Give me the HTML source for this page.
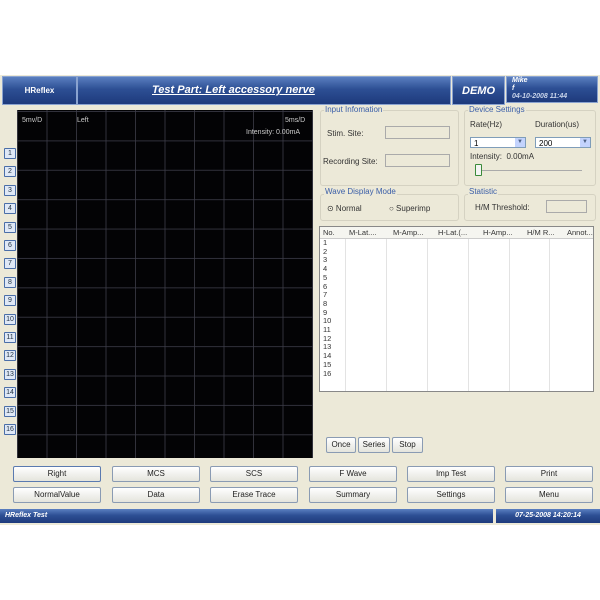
<!DOCTYPE html><html><head><style>
body{margin:0;width:600px;height:600px;background:#fff;font-family:"Liberation Sans",sans-serif;position:relative;overflow:hidden}
.a{position:absolute}
.app{left:0;top:75px;width:600px;height:450px;background:#ece9d8}
.hd{background:linear-gradient(#5a7fc0,#2d4f94 45%,#1e3a7c);border:1px solid #8aa3d0;color:#fff}
.sc{left:17px;top:110px;width:296px;height:348px;background:#030305;
background-image:linear-gradient(90deg,rgba(60,60,72,.8) 1px,transparent 1px),linear-gradient(rgba(60,60,72,.8) 1px,transparent 1px);background-size:29.5px 29.4px;background-position:0 1px}
.nb{left:4px;width:10px;height:9px;border:1px solid #4a6ea8;background:#dfe8f6;font-size:7px;color:#234;text-align:center;line-height:9px;border-radius:1px}
.btn{height:14px;border:1px solid #8a9bb3;border-radius:2px;background:linear-gradient(#fff,#e4e4dc);font-size:8px;color:#222;text-align:center;line-height:14px;width:86px}
.gb{border:1px solid #d5d2c2;border-radius:3px}
.lg{font-size:8px;color:#3a5ea8;background:#ece9d8;padding:0 1px}
.t{font-size:8px;color:#333}
.in{background:#ece9d8;border:1px solid #aaa;height:11px}
.sel{background:#fff;border:1px solid #7f9db9;height:11px;font-size:8px;line-height:11px;padding-left:3px;box-sizing:border-box}
.dd{position:absolute;right:0;top:0;width:10px;height:9px;background:#c3d3fd;color:#4d6185;font-size:6px;text-align:center;line-height:9px}
</style></head><body>
<div class="a app"></div>
<div class="a hd" style="left:2px;top:76px;width:73px;height:27px;font-size:8px;text-align:center;line-height:27px;font-weight:bold">HReflex</div>
<div class="a hd" style="left:77px;top:76px;width:372px;height:27px;"><div style="position:absolute;left:74px;top:7px;font-size:11px;font-style:italic;font-weight:bold;text-decoration:underline">Test Part: Left accessory nerve</div></div>
<div class="a hd" style="left:452px;top:76px;width:51px;height:27px;font-size:11px;font-style:italic;font-weight:bold;text-align:center;line-height:29px">DEMO</div>
<div class="a hd" style="left:506px;top:76px;width:92px;height:27px;font-size:7px;font-style:italic;font-weight:bold;line-height:8px;padding-left:5px;box-sizing:border-box">Mike<br>f<br><span style="color:#c8d4ea">04-10-2008 11:44</span></div>
<div class="a sc"></div>
<div class="a" style="left:22px;top:117px;font-size:7px;color:#ccc">5mv/D</div>
<div class="a" style="left:77px;top:117px;font-size:7px;color:#ccc">Left</div>
<div class="a" style="left:285px;top:117px;font-size:7px;color:#ccc">5ms/D</div>
<div class="a" style="left:246px;top:129px;font-size:7px;color:#ccc">Intensity: 0.00mA</div>
<div class="a nb" style="top:148px">1</div><div class="a nb" style="top:166px">2</div><div class="a nb" style="top:185px">3</div><div class="a nb" style="top:203px">4</div><div class="a nb" style="top:222px">5</div><div class="a nb" style="top:240px">6</div><div class="a nb" style="top:258px">7</div><div class="a nb" style="top:277px">8</div><div class="a nb" style="top:295px">9</div><div class="a nb" style="top:314px">10</div><div class="a nb" style="top:332px">11</div><div class="a nb" style="top:350px">12</div><div class="a nb" style="top:369px">13</div><div class="a nb" style="top:387px">14</div><div class="a nb" style="top:406px">15</div><div class="a nb" style="top:424px">16</div>
<div class="a gb" style="left:320px;top:110px;width:137px;height:74px"></div>
<div class="a lg" style="left:324px;top:105px">Input Infomation</div>
<div class="a t" style="left:327px;top:129px">Stim. Site:</div><div class="a in" style="left:385px;top:126px;width:63px"></div>
<div class="a t" style="left:323px;top:157px">Recording Site:</div><div class="a in" style="left:385px;top:154px;width:63px"></div>
<div class="a gb" style="left:464px;top:110px;width:130px;height:74px"></div>
<div class="a lg" style="left:468px;top:105px">Device Settings</div>
<div class="a t" style="left:470px;top:120px">Rate(Hz)</div><div class="a t" style="left:535px;top:120px">Duration(us)</div>
<div class="a sel" style="left:470px;top:137px;width:56px">1<div class="dd">▼</div></div>
<div class="a sel" style="left:535px;top:137px;width:56px">200<div class="dd">▼</div></div>
<div class="a t" style="left:470px;top:152px">Intensity:&nbsp; 0.00mA</div>
<div class="a" style="left:478px;top:170px;width:104px;height:1px;background:#aaa"></div>
<div class="a" style="left:475px;top:164px;width:5px;height:10px;border:1px solid #3a8a3a;background:#f4f4f4;border-radius:1px"></div>
<div class="a gb" style="left:320px;top:194px;width:137px;height:25px"></div>
<div class="a lg" style="left:324px;top:187px">Wave Display Mode</div>
<div class="a t" style="left:327px;top:204px">⊙ Normal</div><div class="a t" style="left:389px;top:204px">○ Superimp</div>
<div class="a gb" style="left:464px;top:194px;width:130px;height:25px"></div>
<div class="a lg" style="left:468px;top:187px">Statistic</div>
<div class="a t" style="left:475px;top:203px">H/M Threshold:</div><div class="a in" style="left:546px;top:200px;width:39px"></div>
<div class="a" style="left:319px;top:226px;width:273px;height:164px;background:#fff;border:1px solid #888;font-size:7.5px;color:#333">
<div style="display:flex;height:11px;line-height:11px;border-bottom:1px solid #ccc;background:#f5f5f0"><span style="width:22px;padding-left:3px">No.</span><span style="width:40px;padding-left:4px">M-Lat....</span><span style="width:41px;padding-left:4px">M-Amp...</span><span style="width:41px;padding-left:4px">H-Lat.(...</span><span style="width:40px;padding-left:4px">H-Amp...</span><span style="width:36px;padding-left:4px">H/M R...</span><span style="padding-left:4px">Annot...</span></div>
<div style="position:absolute;top:12px;left:0;right:0;bottom:0;line-height:8.7px;padding-left:3px;background:linear-gradient(90deg,transparent 25px,#e3e3e3 25px,#e3e3e3 26px,transparent 26px,transparent 66px,#e3e3e3 66px,#e3e3e3 67px,transparent 67px,transparent 107px,#e3e3e3 107px,#e3e3e3 108px,transparent 108px,transparent 148px,#e3e3e3 148px,#e3e3e3 149px,transparent 149px,transparent 189px,#e3e3e3 189px,#e3e3e3 190px,transparent 190px,transparent 229px,#e3e3e3 229px,#e3e3e3 230px,transparent 230px)">1<br>2<br>3<br>4<br>5<br>6<br>7<br>8<br>9<br>10<br>11<br>12<br>13<br>14<br>15<br>16</div></div>
<div class="a btn" style="left:326px;top:437px;width:28px">Once</div>
<div class="a btn" style="left:358px;top:437px;width:30px">Series</div>
<div class="a btn" style="left:392px;top:437px;width:29px">Stop</div>
<div class="a btn" style="left:13px;top:466px;border-color:#5a7ab0">Right</div><div class="a btn" style="left:112px;top:466px">MCS</div><div class="a btn" style="left:210px;top:466px">SCS</div><div class="a btn" style="left:309px;top:466px">F Wave</div><div class="a btn" style="left:407px;top:466px">Imp Test</div><div class="a btn" style="left:505px;top:466px">Print</div>
<div class="a btn" style="left:13px;top:487px">NormalValue</div><div class="a btn" style="left:112px;top:487px">Data</div><div class="a btn" style="left:210px;top:487px">Erase Trace</div><div class="a btn" style="left:309px;top:487px">Summary</div><div class="a btn" style="left:407px;top:487px">Settings</div><div class="a btn" style="left:505px;top:487px">Menu</div>
<div class="a hd" style="left:0;top:509px;width:493px;height:14px;font-size:7px;font-style:italic;font-weight:bold;line-height:14px;padding-left:5px;box-sizing:border-box;border:none">HReflex Test</div>
<div class="a hd" style="left:496px;top:509px;width:104px;height:14px;font-size:7px;font-style:italic;font-weight:bold;line-height:14px;text-align:center;border:none">07-25-2008 14:20:14</div>
</body></html>
